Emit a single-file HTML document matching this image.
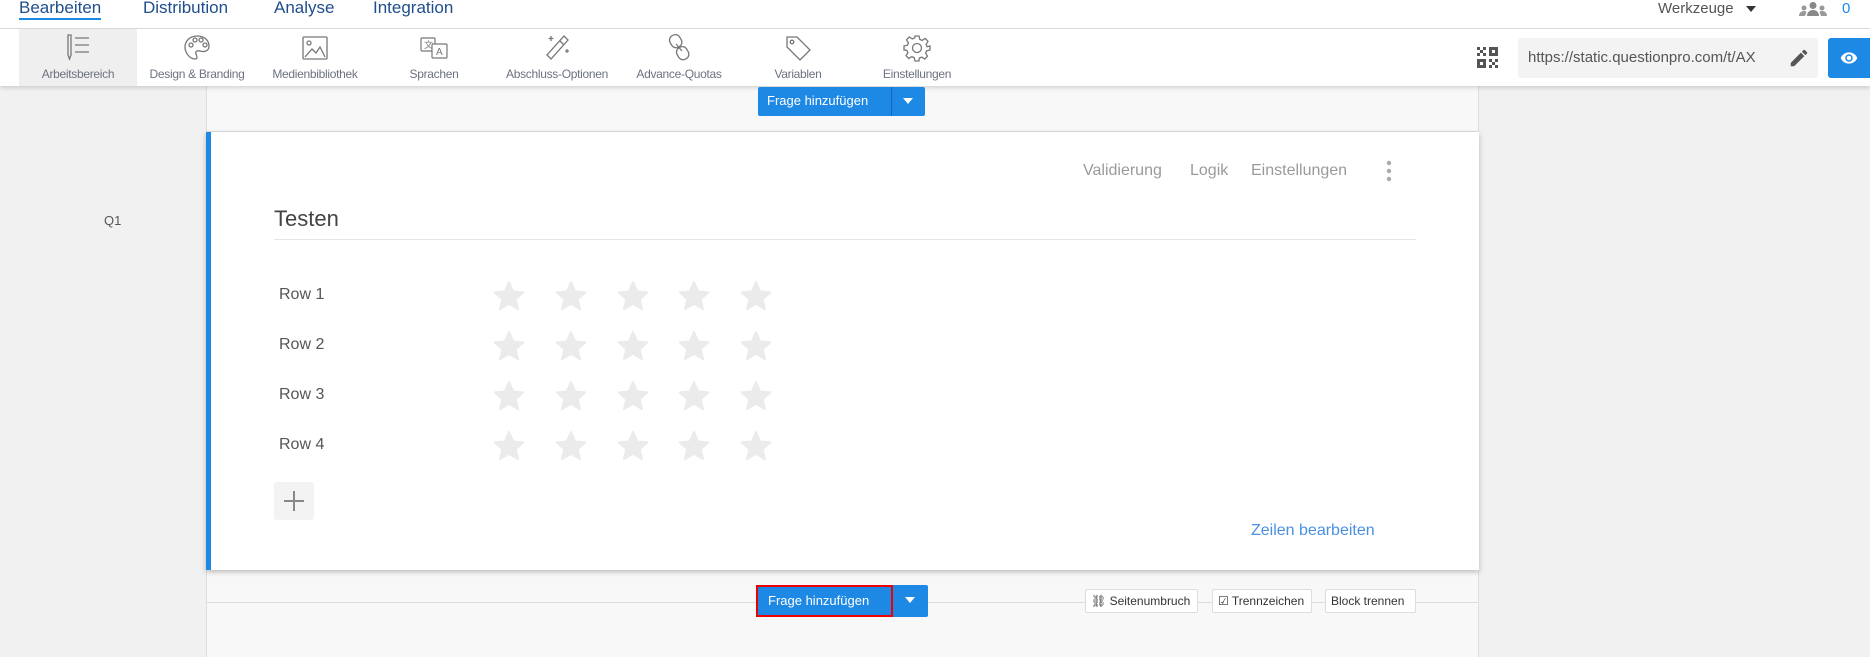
<!DOCTYPE html>
<html><head><meta charset="utf-8">
<style>
*{box-sizing:border-box;margin:0;padding:0}
body{width:1870px;height:657px;overflow:hidden;background:#f1f1f1;font-family:"Liberation Sans",sans-serif;position:relative}
.abs{position:absolute}
.nav{left:0;top:0;width:1870px;height:29px;background:#fff;border-bottom:1px solid #ddd}
.nav a{position:absolute;top:0;font-size:17px;color:#1f4e8c;line-height:16px}
.tb{left:0;top:29px;width:1870px;height:57px;background:#fff;box-shadow:0 2px 4px rgba(0,0,0,.15);z-index:2}
.ti{position:absolute;top:0;height:57px;width:118px;text-align:center}
.ti svg{position:absolute;left:50%;top:4px;margin-left:-15px}
.ti span{position:absolute;left:-10px;right:-10px;top:38px;font-size:12px;color:#6b7280;letter-spacing:-0.3px}
.col{left:206px;top:86px;width:1273px;height:571px;background:#f8f8f8;border-left:1px solid #ddd;border-right:1px solid #ddd}
.btn{background:#1e88e5;color:#fff;font-size:13px;border-radius:2px}
.card{left:206px;top:132px;width:1273px;height:438px;background:#fff;box-shadow:0 2px 5px rgba(0,0,0,.25);border-left:5px solid #1e88e5}
.gl{font-size:16px;color:#9a9a9a}
.row{position:absolute;left:68px;font-size:16px;color:#555}
.star{position:absolute}
.sb{position:absolute;top:589px;height:24px;border:1px solid #ddd;background:#fff;font-size:12px;color:#333;line-height:22px;padding:0 5px;border-radius:2px}
</style></head><body>
<div class="abs nav">
 <a style="left:19px;top:0px;border-bottom:2px solid #1e88e5;padding-bottom:2px">Bearbeiten</a>
 <a style="left:143px">Distribution</a>
 <a style="left:274px">Analyse</a>
 <a style="left:373px">Integration</a>
 <span class="abs" style="left:1658px;top:0;font-size:15px;color:#555">Werkzeuge</span>
 <span class="abs" style="left:1746px;top:6px;width:0;height:0;border-left:5px solid transparent;border-right:5px solid transparent;border-top:6px solid #333"></span>
 <svg class="abs" style="left:1799px;top:1px" width="28" height="16" viewBox="0 0 28 16"><circle cx="14" cy="4.5" r="3.5" fill="#888"/><path d="M8 15c0-4 3-6 6-6s6 2 6 6z" fill="#888"/><circle cx="5" cy="7" r="2.5" fill="#999"/><path d="M0 15c0-3 2-5 5-5 1 0 2 .3 2.5 1L6 15z" fill="#999"/><circle cx="23" cy="7" r="2.5" fill="#999"/><path d="M28 15c0-3-2-5-5-5-1 0-2 .3-2.5 1L22 15z" fill="#999"/></svg>
 <span class="abs" style="left:1842px;top:0;font-size:15px;color:#1e88e5">0</span>
</div>
<div class="abs tb">
 <div class="ti" style="left:19px;background:#efefef;width:118px"><svg width="30" height="30" viewBox="0 0 30 30" fill="none" stroke="#777" stroke-width="1.3"><path d="M5 2h3v20l-1.5 4L5 22z"/><path d="M12 5h14M12 12h14M12 19h14"/></svg><span>Arbeitsbereich</span></div>
 <div class="ti" style="left:138px"><svg width="30" height="30" viewBox="0 0 30 30" fill="none" stroke="#777" stroke-width="1.3"><path d="M15 3C8 3 3 8 3 14c0 6 5 12 10 12 3 0 2-3 1-5s1-4 4-3 9 1 9-5C27 7 22 3 15 3z"/><circle cx="9" cy="12" r="2"/><circle cx="13" cy="7" r="2"/><circle cx="19" cy="7" r="2"/><circle cx="23" cy="12" r="2"/></svg><span>Design &amp; Branding</span></div>
 <div class="ti" style="left:256px"><svg width="30" height="30" viewBox="0 0 30 30" fill="none" stroke="#777" stroke-width="1.3"><rect x="3" y="4" width="24" height="22" rx="1"/><circle cx="9" cy="10" r="2"/><path d="M5 24l7-8 4 4 4-6 5 10"/></svg><span>Medienbibliothek</span></div>
 <div class="ti" style="left:375px"><svg width="30" height="30" viewBox="0 0 30 30" fill="none" stroke="#777" stroke-width="1.2"><rect x="2" y="5" width="14" height="13" rx="1"/><rect x="13" y="11" width="15" height="14" rx="1" fill="#fff"/><text x="5" y="15" font-size="9" fill="#777" stroke="none">文</text><text x="17" y="22" font-size="10" fill="#777" stroke="none">A</text></svg><span>Sprachen</span></div>
 <div class="ti" style="left:498px"><svg width="30" height="30" viewBox="0 0 30 30" fill="none" stroke="#777" stroke-width="1.3"><path d="M22 3l4 4L9 26l-4-4z"/><path d="M18 8l4 4"/><path d="M9 3v5M6.5 5.5h5M25 16v4M23 18h4"/></svg><span>Abschluss-Optionen</span></div>
 <div class="ti" style="left:620px"><svg width="30" height="30" viewBox="0 0 30 30" fill="none" stroke="#777" stroke-width="1.3"><rect x="6" y="2" width="11" height="13" rx="5" transform="rotate(-30 11 8)"/><rect x="13" y="14" width="11" height="13" rx="5" transform="rotate(-30 18 20)"/><path d="M12 11l6 7"/></svg><span>Advance-Quotas</span></div>
 <div class="ti" style="left:739px"><svg width="30" height="30" viewBox="0 0 30 30" fill="none" stroke="#777" stroke-width="1.3"><path d="M4 4h10l13 13-10 10L4 14z"/><circle cx="9" cy="9" r="1.8"/></svg><span>Variablen</span></div>
 <div class="ti" style="left:858px"><svg width="30" height="30" viewBox="0 0 30 30" fill="none" stroke="#777" stroke-width="1.3"><circle cx="15" cy="15" r="4.5"/><path d="M13 3h4l.8 3.4 2.4 1 3-1.9 2.8 2.8-1.9 3 1 2.4L28 13v4l-3.4.8-1 2.4 1.9 3-2.8 2.8-3-1.9-2.4 1L17 28h-4l-.8-3.4-2.4-1-3 1.9-2.8-2.8 1.9-3-1-2.4L2 17v-4l3.4-.8 1-2.4-1.9-3 2.8-2.8 3 1.9 2.4-1z"/></svg><span>Einstellungen</span></div>
 <svg class="abs" style="left:1477px;top:18px" width="21" height="21" viewBox="0 0 7 7" fill="#555"><path d="M0 0h1v1H0zM2 0h1v1H2zM1 1h1v1H1zM0 2h1v1H0zM2 2h1v1H2zM4 0h3v3H4zM0 4h3v3H0z"/><path d="M5 1h1v1H5zM1 5h1v1H1z" fill="#fff"/><path d="M4 4h1v1H4zM6 4h1v1H6zM5 5h1v1H5zM4 6h1v1H4zM6 6h1v1H6z"/></svg>
 <div class="abs" style="left:1518px;top:9px;width:300px;height:40px;background:#f3f3f3;border-radius:3px;font-size:15px;color:#555;line-height:40px;padding-left:10px">https://static.questionpro.com/t/AX</div>
 <svg class="abs" style="left:1788px;top:18px" width="22" height="22" viewBox="0 0 24 24"><path d="M3 17.25V21h3.75L17.8 9.94l-3.75-3.75zM20.7 7.04a1 1 0 000-1.41l-2.34-2.34a1 1 0 00-1.41 0l-1.83 1.83 3.75 3.75z" fill="#555"/></svg>
 <div class="abs" style="left:1828px;top:9px;width:42px;height:40px;background:#1e88e5;border-radius:3px 0 0 3px"><svg style="position:absolute;left:11px;top:11px" width="20" height="18" viewBox="0 0 24 24"><path d="M12 4.5C7 4.5 2.7 7.6 1 12c1.7 4.4 6 7.5 11 7.5s9.3-3.1 11-7.5c-1.7-4.4-6-7.5-11-7.5zm0 12.5a5 5 0 110-10 5 5 0 010 10zm0-8a3 3 0 100 6 3 3 0 000-6z" fill="#fff"/></svg></div>
</div>
<div class="abs col"></div>
<div class="abs" style="left:207px;top:131px;width:1271px;height:1px;background:#ddd"></div>
<div class="abs btn" style="left:758px;top:87px;width:167px;height:29px;z-index:3"><span class="abs" style="left:9px;top:6px">Frage hinzufügen</span><span class="abs" style="left:133px;top:0;width:1px;height:29px;background:#1565c0"></span><span class="abs" style="left:145px;top:11px;border-left:5px solid transparent;border-right:5px solid transparent;border-top:6px solid #fff"></span></div>
<div class="abs" style="left:104px;top:213px;font-size:13px;color:#555">Q1</div>
<div class="abs card">
 <span class="abs gl" style="left:872px;top:30px">Validierung</span>
 <span class="abs gl" style="left:979px;top:30px">Logik</span>
 <span class="abs gl" style="left:1040px;top:30px">Einstellungen</span>
 <svg class="abs" style="left:1175px;top:27px" width="6" height="24"><circle cx="3" cy="4" r="2.2" fill="#aaa"/><circle cx="3" cy="12" r="2.2" fill="#aaa"/><circle cx="3" cy="20" r="2.2" fill="#aaa"/></svg>
 <span class="abs" style="left:63px;top:74px;font-size:22px;color:#444">Testen</span>
 <div class="abs" style="left:63px;top:107px;width:1142px;height:1px;background:#e5e5e5"></div>
 <span class="row" style="top:154px">Row 1</span>
 <span class="row" style="top:204px">Row 2</span>
 <span class="row" style="top:254px">Row 3</span>
 <span class="row" style="top:304px">Row 4</span>
 <div class="abs" style="left:63px;top:350px;width:40px;height:38px;background:#f3f3f3;border-radius:3px"><span class="abs" style="left:10px;top:18px;width:20px;height:2px;background:#888"></span><span class="abs" style="left:19px;top:9px;width:2px;height:20px;background:#888"></span></div>
 <span class="abs" style="left:1040px;top:390px;font-size:16px;color:#4a90e2">Zeilen bearbeiten</span>
</div>
<svg class="abs" style="left:0;top:0;z-index:1" width="1870" height="657">
 <defs><path id="s" d="M0-15l4.2 9.5 10.1.9-7.6 6.8 2.3 10-9-5.4-9 5.4 2.3-10-7.6-6.8 10.1-.9z" fill="#ebebeb" stroke="#ebebeb" stroke-width="2" stroke-linejoin="round"/></defs>
 <g id="r"><use href="#s" x="509" y="297"/><use href="#s" x="571" y="297"/><use href="#s" x="633" y="297"/><use href="#s" x="694" y="297"/><use href="#s" x="756" y="297"/></g>
 <use href="#r" y="50"/><use href="#r" y="100"/><use href="#r" y="150"/>
</svg>
<div class="abs" style="left:207px;top:602px;width:1271px;height:1px;background:#ddd"></div>
<div class="abs btn" style="left:756px;top:585px;width:172px;height:32px">
 <span class="abs" style="left:0;top:0;width:137px;height:32px;border:2px solid #e00"></span>
 <span class="abs" style="left:12px;top:8px">Frage hinzufügen</span>
 <span class="abs" style="left:149px;top:12px;border-left:5px solid transparent;border-right:5px solid transparent;border-top:6px solid #fff"></span></div>
<div class="sb" style="left:1085px;width:113px">⛓ Seitenumbruch</div>
<div class="sb" style="left:1212px;width:100px">☑ Trennzeichen</div>
<div class="sb" style="left:1325px;width:91px">Block trennen</div>
</body></html>
